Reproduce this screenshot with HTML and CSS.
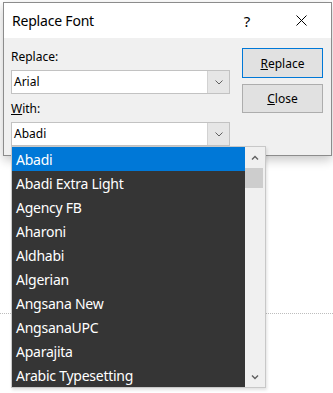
FILE: index.html
```html
<!DOCTYPE html>
<html lang="en">
<head>
    <meta charset="UTF-8">
    <meta name="viewport" content="width=device-width, initial-scale=1.0">
    <title>Replace Font</title>
    <link rel="stylesheet" href="styles.css">
</head>
<body>

    <div class="dialog">
        <!-- Title bar -->
        <div class="titlebar">
            <span class="title">Replace Font</span>
            <span class="help">?</span>
            <span class="close-x">
                <svg width="11" height="11" viewBox="0 0 11 11">
                    <path d="M0.5 0.5 L10.5 10.5 M10.5 0.5 L0.5 10.5" stroke="#000" stroke-width="1" fill="none"/>
                </svg>
            </span>
        </div>

        <div class="dialog-body">
            <div class="fields">
                <label class="field-label">Replace:</label>
                <div class="combo">
                    <span class="combo-value">Arial</span>
                    <span class="combo-btn">
                        <svg width="8" height="5" viewBox="0 0 8 5"><path d="M0.5 0.5 L4 4 L7.5 0.5" stroke="#606060" fill="none"/></svg>
                    </span>
                </div>

                <label class="field-label with-label"><u>W</u>ith:</label>
                <div class="combo">
                    <span class="combo-value">Abadi</span>
                    <span class="combo-btn">
                        <svg width="8" height="5" viewBox="0 0 8 5"><path d="M0.5 0.5 L4 4 L7.5 0.5" stroke="#606060" fill="none"/></svg>
                    </span>

                    <!-- Open font list -->
                    <div class="dropdown">
                        <ul class="font-list">
                            <li class="selected">Abadi</li>
                            <li>Abadi Extra Light</li>
                            <li>Agency FB</li>
                            <li>Aharoni</li>
                            <li>Aldhabi</li>
                            <li>Algerian</li>
                            <li>Angsana New</li>
                            <li>AngsanaUPC</li>
                            <li>Aparajita</li>
                            <li>Arabic Typesetting</li>
                        </ul>
                        <div class="scrollbar">
                            <span class="scroll-arrow">
                                <svg width="8" height="5" viewBox="0 0 8 5"><path d="M1 4.5 L4 1.5 L7 4.5" stroke="#606060" stroke-width="1.4" fill="none"/></svg>
                            </span>
                            <span class="scroll-thumb"></span>
                            <span class="scroll-track"></span>
                            <span class="scroll-arrow scroll-down">
                                <svg width="8" height="5" viewBox="0 0 8 5"><path d="M1 0.5 L4 3.5 L7 0.5" stroke="#606060" stroke-width="1.4" fill="none"/></svg>
                            </span>
                        </div>
                    </div>
                </div>
            </div>

            <div class="actions">
                <button class="btn btn-default"><u>R</u>eplace</button>
                <button class="btn btn-close"><u>C</u>lose</button>
            </div>
        </div>
    </div>

    <!-- slide placeholder edge behind the dialog -->
    <div class="slide-edge"></div>

</body>
</html>
```

FILE: styles.css
```css
html, body {
    height: 393px;
}
body {
    margin: 0;
    background-color: #ffffff;
    font-family: "Noto Sans", "Open Sans", sans-serif;
    color: #000000;
}
.dialog {
    box-sizing: border-box;
    width: 329px;
    height: 154px;
    margin: 2px 0 0 3px;
    background-color: #f0f0f0;
    border: 1px solid #8c8c8c;
    box-shadow: 0 4px 10px rgba(0, 0, 0, 0.22);
    position: relative;
    z-index: 1;
}
.titlebar {
    display: flex;
    align-items: center;
    height: 35px;
    background-color: #ffffff;
    padding: 0 24px 0 8px;
}
.title {
    font-size: 14px;
    letter-spacing: -0.2px;
    flex: 1;
}
.help {
    width: 20px;
    text-align: center;
    font-size: 15px;
    margin-right: 39px;
}
.close-x {
    display: flex;
}
.dialog-body {
    display: flex;
    gap: 12px;
    padding: 10px 8px 0 7px;
}
.fields {
    display: flex;
    flex-direction: column;
    width: 219px;
    padding-top: 1px;
}
.field-label {
    font-size: 12px;
    line-height: 16px;
    height: 16px;
}
.with-label {
    margin-top: 7px;
}
.combo {
    box-sizing: border-box;
    display: flex;
    height: 24px;
    margin-top: 5px;
    background-color: #ffffff;
    border: 1px solid #c2c2c2;
    position: relative;
}
.combo-value {
    flex: 1;
    font-size: 12px;
    line-height: 22px;
    padding-left: 2px;
}
.combo-btn {
    width: 21px;
    background-color: #e6e6e6;
    border-left: 1px solid #d2d2d2;
    display: flex;
    align-items: center;
    justify-content: center;
}
.dropdown {
    position: absolute;
    top: 23px;
    left: -1px;
    width: 255px;
    box-sizing: border-box;
    display: flex;
    border: 1px solid #c8c8c8;
    background-color: #f0f0f0;
    box-shadow: 1px 2px 3px rgba(0, 0, 0, 0.12);
}
.font-list {
    list-style: none;
    margin: 0;
    padding: 0;
    flex: 1;
    background-color: #353535;
}
.font-list li {
    height: 23px;
    padding: 1px 0 0 4px;
    line-height: 24px;
    font-size: 14px;
    letter-spacing: -0.25px;
    color: #ffffff;
}
.font-list li.selected {
    background-color: #0078d7;
}
.scrollbar {
    width: 20px;
    display: flex;
    flex-direction: column;
    background-color: #f0f0f0;
}
.scroll-arrow {
    height: 20px;
    display: flex;
    align-items: center;
    justify-content: center;
}
.scroll-down {
    padding-top: 2px;
}
.scroll-thumb {
    height: 20px;
    margin: 1px 2px 0 0;
    background-color: #cdcdcd;
}
.scroll-track {
    flex: 1;
}
.actions {
    display: flex;
    flex-direction: column;
    gap: 6px;
}
.btn {
    box-sizing: border-box;
    width: 81px;
    height: 30px;
    font-family: "Noto Sans", "Open Sans", sans-serif;
    font-size: 12px;
    color: #000000;
    background-color: #e1e1e1;
    border: 1px solid #adadad;
    padding: 0;
}
.btn-default {
    border-color: #0078d7;
}
.btn-close {
    height: 29px;
}
.slide-edge {
    margin-top: 157px;
    border-top: 1px dotted #bdbdbd;
}
```
